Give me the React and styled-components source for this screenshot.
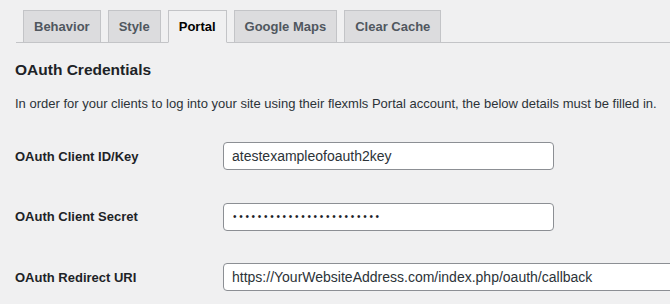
import React from "react";
import styled, { createGlobalStyle } from "styled-components";

const Global = createGlobalStyle`
  html, body { margin: 0; padding: 0; background: #f0f0f1; }
  body { font-family: "Liberation Sans", Arial, sans-serif; color: #1d2327; overflow: hidden; }
`;

const Page = styled.div`
  width: 670px;
  height: 304px;
  overflow: hidden;
  background: #f0f0f1;
`;

const TabBar = styled.nav`
  display: flex;
  margin-left: 16px;
  padding-top: 10px;
  border-bottom: 1px solid #c3c4c7;
`;

const Tab = styled.a`
  display: block;
  margin-left: 7px;
  margin-bottom: -1px;
  padding: 5px 10px;
  font-size: 13px;
  line-height: 21px;
  font-weight: 700;
  border: 1px solid #c3c4c7;
  background: ${(p) => (p.$active ? "#f0f0f1" : "#dcdcde")};
  border-bottom-color: ${(p) => (p.$active ? "#f0f0f1" : "#c3c4c7")};
  color: ${(p) => (p.$active ? "#000" : "#50575e")};
  white-space: nowrap;
`;

const Content = styled.div`
  padding-left: 15px;
`;

const Heading = styled.h2`
  margin: 17px 0 0;
  font-size: 15.5px;
  line-height: 20px;
  font-weight: 700;
  color: #1d2327;
`;

const Description = styled.p`
  margin: 14px 0 0;
  font-size: 13px;
  line-height: 20px;
  color: #2c3338;
  white-space: nowrap;
`;

const Form = styled.div`
  display: grid;
  grid-template-columns: 208px auto;
  row-gap: 32.5px;
  margin-top: 28px;
  align-items: center;
`;

const Label = styled.label`
  font-size: 13px;
  font-weight: 700;
  color: #1d2327;
  white-space: nowrap;
`;

const Input = styled.input`
  box-sizing: border-box;
  width: ${(p) => p.$width}px;
  height: 28px;
  margin: 0;
  padding: 0 8px;
  border: 1px solid #8c8f94;
  border-radius: 4px;
  background: #fff;
  font-family: "Liberation Sans", Arial, sans-serif;
  font-size: 14px;
  color: #2c3338;
  outline: none;
`;

const SecretInput = styled(Input)`
  padding: 0 9px;
  font-size: 10px;
  letter-spacing: 2.7px;
  color: #1d2327;
`;

export default function App() {
  const tabs = ["Behavior", "Style", "Portal", "Google Maps", "Clear Cache"];
  return (
    <Page>
      <Global />
      <TabBar>
        {tabs.map((t) => (
          <Tab key={t} $active={t === "Portal"}>
            {t}
          </Tab>
        ))}
      </TabBar>
      <Content>
        <Heading>OAuth Credentials</Heading>
        <Description>
          In order for your clients to log into your site using their flexmls Portal account, the below details must be filled in.
        </Description>
        <Form>
          <Label>OAuth Client ID/Key</Label>
          <Input $width={331} readOnly value="atestexampleofoauth2key" />
          <Label>OAuth Client Secret</Label>
          <SecretInput $width={331} readOnly type="password" value="abcdefghijklmnopqrstuvwx" />
          <Label>OAuth Redirect URI</Label>
          <Input $width={470} readOnly value="https://YourWebsiteAddress.com/index.php/oauth/callback" />
        </Form>
      </Content>
    </Page>
  );
}
